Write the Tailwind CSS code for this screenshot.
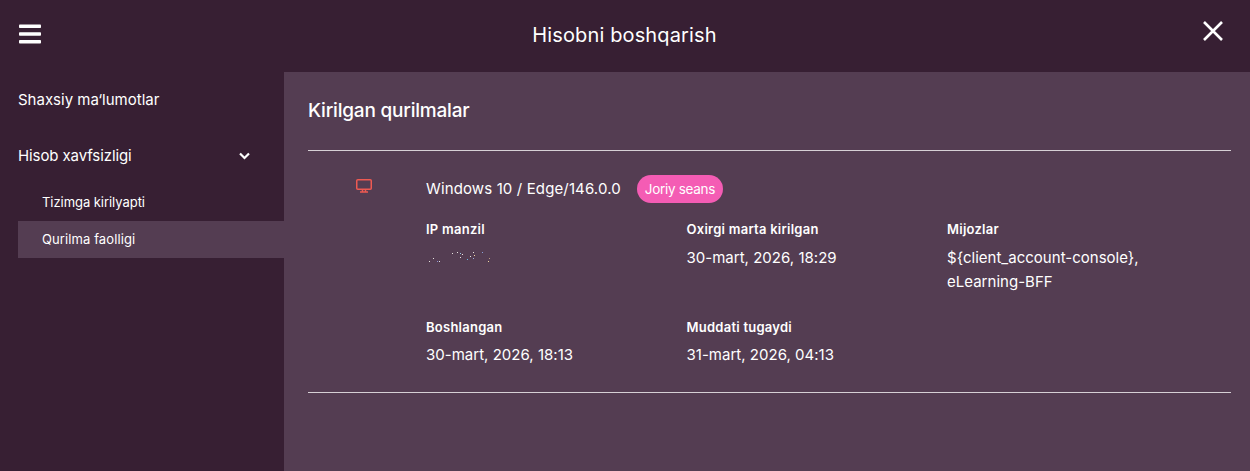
<!DOCTYPE html>
<html lang="uz">
<head>
    <meta charset="UTF-8">
    <title>Hisobni boshqarish</title>
    <script src="https://cdn.jsdelivr.net/npm/@tailwindcss/browser@4"></script>
</head>
<body class="bg-[#371f33] text-white font-['Inter',sans-serif] overflow-hidden">
    <div class="h-[471px] w-[1250px] flex flex-col">
        <!-- header -->
        <header class="h-[72px] shrink-0 flex items-center justify-between pl-[19px] pr-[26px]">
            <svg class="w-[22px] h-[20px] -mt-[4px]" viewBox="0 0 22 20" fill="#fff">
                <rect x="0" y="0.5" width="22" height="3.6" rx="0.8"/>
                <rect x="0" y="8.2" width="22" height="3.6" rx="0.8"/>
                <rect x="0" y="15.9" width="22" height="3.6" rx="0.8"/>
            </svg>
            <h1 class="text-[20px] leading-none tracking-[0.14px] -mt-[2px] ml-[6px]">Hisobni boshqarish</h1>
            <svg class="w-[22px] h-[22px] -mt-[10px]" viewBox="0 0 22 22" stroke="#fff" stroke-width="2.6" fill="none">
                <path d="M2 2 L20 20 M20 2 L2 20"/>
            </svg>
        </header>

        <div class="flex flex-1">
            <!-- sidebar -->
            <nav class="w-[284px] shrink-0 pl-[18px]">
                <div class="h-[56px] flex items-center text-[15px]">Shaxsiy ma‘lumotlar</div>
                <div class="h-[56px] flex items-center justify-between pr-[34px] text-[15px] tracking-[-0.1px]">
                    <span>Hisob xavfsizligi</span>
                    <svg class="w-[11px] h-[8px]" viewBox="0 0 11 8" fill="none" stroke="#fff" stroke-width="2.2">
                        <path d="M1 1.5 L5.5 6 L10 1.5"/>
                    </svg>
                </div>
                <div class="h-[37px] flex items-center pl-[24px] text-[13px] tracking-[-0.05px]">Tizimga kirilyapti</div>
                <div class="h-[37px] flex items-center pl-[24px] text-[13px] tracking-[0.1px] bg-[#543d52]">Qurilma faolligi</div>
            </nav>

            <!-- main -->
            <main class="flex-1 bg-[#543d52] pl-[24px] pr-[19px]">
                <h2 class="h-[79px] flex items-center text-[19px] font-medium tracking-[-0.2px] border-b border-[#d6d0d5]">Kirilgan qurilmalar</h2>

                <div class="flex pt-[24px] h-[242px] border-b border-[#d6d0d5]">
                    <div class="w-[118px] shrink-0 pl-[48px] pt-[4px]">
                        <svg class="w-[16px] h-[14px]" viewBox="0 0 16 14" fill="none" stroke="#ee5a52" stroke-width="1.5">
                            <rect x="0.75" y="0.75" width="14.5" height="9.5" rx="1"/>
                            <path d="M6.5 10.5 V12.5 M9.5 10.5 V12.5 M4 13 H12"/>
                        </svg>
                    </div>
                    <div class="flex-1">
                        <div class="flex items-center h-[28px] gap-[16px]">
                            <span class="text-[15px] tracking-[0.13px]">Windows 10 / Edge/146.0.0</span>
                            <span class="h-[28px] px-[8px] flex items-center rounded-full bg-[#f45cb4] text-[13.5px] tracking-[-0.3px]">Joriy seans</span>
                        </div>
                        <div class="grid grid-cols-[260.5px_260.5px_260.5px] mt-[16px]">
                            <div class="h-[98px]">
                                <div class="text-[13px] font-semibold leading-[20px] tracking-[0.25px]">IP manzil</div>
                                <svg class="mt-[13px] block" width="66" height="12" viewBox="0 0 66 12" fill="#e8e4e0">
                                    <rect x="3" y="9" width="1" height="1"/><rect x="7" y="6" width="1" height="1"/>
                                    <rect x="11" y="9" width="1" height="1" fill="#8a8fd0"/><rect x="13" y="9" width="1" height="1"/>
                                    <rect x="26" y="1" width="1" height="1"/><rect x="31" y="0" width="1" height="1"/>
                                    <rect x="34" y="1" width="1" height="1" fill="#9ac8e8"/><rect x="36" y="2" width="1" height="1"/>
                                    <rect x="34" y="5" width="1" height="1"/><rect x="41" y="7" width="1" height="1" fill="#6ab8e0"/>
                                    <rect x="44" y="4" width="1" height="1"/><rect x="47" y="0" width="1" height="1"/>
                                    <rect x="48" y="3" width="1" height="1" fill="#f0d8a0"/><rect x="47" y="6" width="1" height="1" fill="#9aa8d8"/>
                                    <rect x="56" y="0" width="1" height="1" fill="#8aa0d8"/><rect x="63" y="6" width="1" height="1" fill="#b89a80"/>
                                    <rect x="62" y="9" width="1" height="1" fill="#f0d8a0"/>
                                </svg>
                            </div>
                            <div>
                                <div class="text-[13px] font-semibold leading-[20px] tracking-[0.25px]">Oxirgi marta kirilgan</div>
                                <div class="text-[15px] leading-[24px] mt-[7px] tracking-[0.02px]">30-mart, 2026, 18:29</div>
                            </div>
                            <div>
                                <div class="text-[13px] font-semibold leading-[20px] tracking-[0.25px]">Mijozlar</div>
                                <div class="text-[15px] leading-[24px] mt-[7px] tracking-[0.02px]">${client_account-console},<br>eLearning-BFF</div>
                            </div>
                            <div>
                                <div class="text-[13px] font-semibold leading-[20px] tracking-[0.25px]">Boshlangan</div>
                                <div class="text-[15px] leading-[24px] mt-[6px] tracking-[0.02px]">30-mart, 2026, 18:13</div>
                            </div>
                            <div>
                                <div class="text-[13px] font-semibold leading-[20px] tracking-[0.25px]">Muddati tugaydi</div>
                                <div class="text-[15px] leading-[24px] mt-[6px] tracking-[0.02px]">31-mart, 2026, 04:13</div>
                            </div>
                        </div>
                    </div>
                </div>
            </main>
        </div>
    </div>
</body>
</html>
